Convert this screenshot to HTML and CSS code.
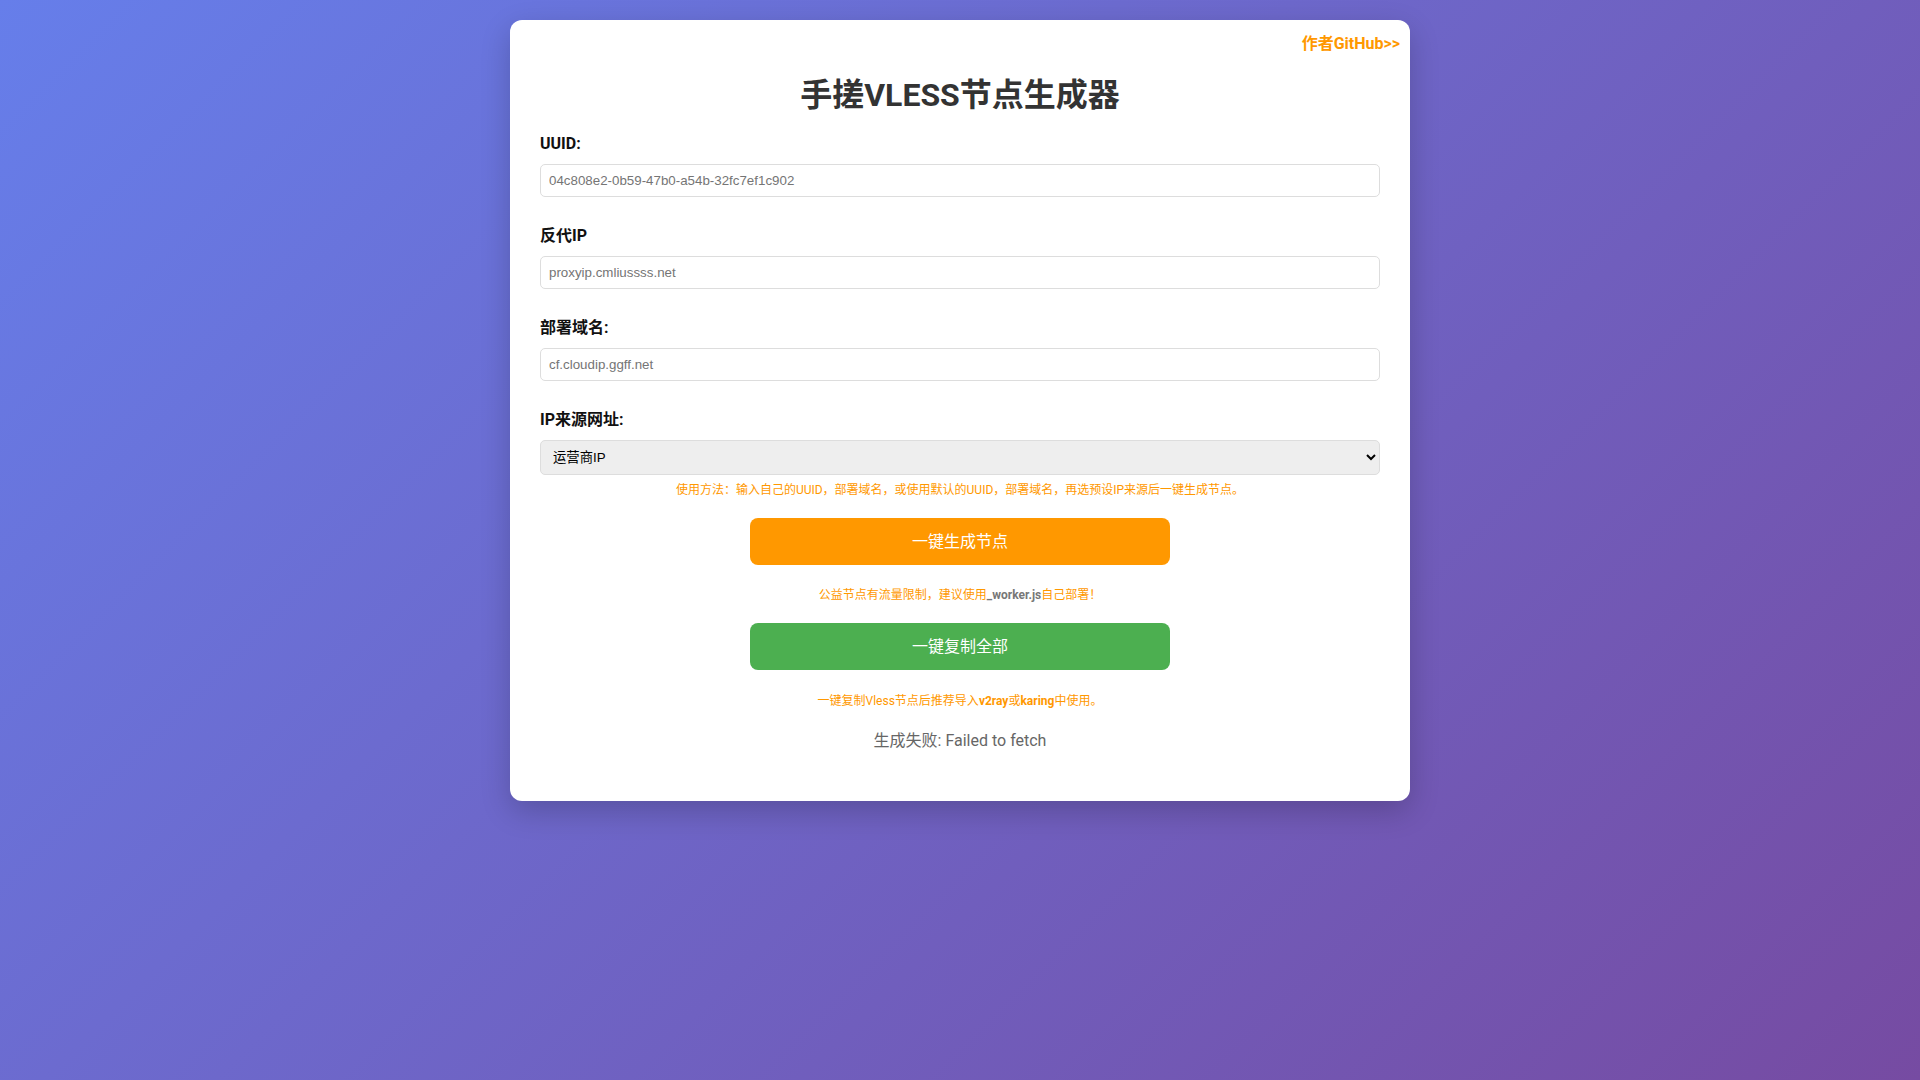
FILE: index.html
```html
<!DOCTYPE html>
<html lang="zh-CN">
<head>
<meta charset="UTF-8">
<title>手搓VLESS节点生成器</title>
<link rel="stylesheet" href="styles.css">
</head>
<body>
<div class="container">
  <a class="github" href="#">作者GitHub&gt;&gt;</a>
  <h1 class="title">手搓VLESS节点生成器</h1>

  <div class="form-group">
    <label class="label" for="uuid">UUID:</label>
    <input class="field" id="uuid" type="text" placeholder="04c808e2-0b59-47b0-a54b-32fc7ef1c902">
  </div>

  <div class="form-group">
    <label class="label" for="proxy">反代IP</label>
    <input class="field" id="proxy" type="text" placeholder="proxyip.cmliussss.net">
  </div>

  <div class="form-group">
    <label class="label" for="host">部署域名:</label>
    <input class="field" id="host" type="text" placeholder="cf.cloudip.ggff.net">
  </div>

  <div class="form-group last">
    <label class="label" for="source">IP来源网址:</label>
    <select class="picker" id="source">
      <option>运营商IP</option>
    </select>
  </div>

  <p class="hint">使用方法：输入自己的UUID，部署域名，或使用默认的UUID，部署域名，再选预设IP来源后一键生成节点。</p>

  <button class="btn btn-orange" type="button">一键生成节点</button>

  <p class="note note-1">公益节点有流量限制，建议使用<b class="gray">_worker.js</b>自己部署！</p>

  <button class="btn btn-green" type="button">一键复制全部</button>

  <p class="note note-2">一键复制Vless节点后推荐导入<b>v2ray</b>或<b>karing</b>中使用。</p>

  <div class="result">生成失败: Failed to fetch</div>
</div>
</body>
</html>
```

FILE: styles.css
```css
html {
  min-height: 100%;
}

body {
  margin: 0;
  padding: 20px;
  min-height: 100vh;
  box-sizing: border-box;
  font-family: Roboto, "Noto Sans CJK SC", sans-serif;
  background: linear-gradient(135deg, #667eea 0%, #764ba2 100%);
}

.container {
  position: relative;
  box-sizing: border-box;
  max-width: 900px;
  margin: 0 auto;
  padding: 30px;
  background: #fff;
  border-radius: 12px;
  box-shadow: 0 10px 30px rgba(0, 0, 0, 0.2);
}

.github {
  position: absolute;
  top: 14px;
  right: 10px;
  font-size: 16px;
  line-height: 20px;
  font-weight: bold;
  color: #ff9800;
  text-decoration: none;
}

.title {
  margin: 25px 0 19px;
  font-size: 32px;
  line-height: 40px;
  font-weight: bold;
  color: #333;
  text-align: center;
}

.form-group {
  display: flex;
  flex-direction: column;
  margin-bottom: 29px;
}

.form-group.last {
  margin-bottom: 7px;
}

.label {
  display: block;
  margin-bottom: 10px;
  font-size: 16px;
  line-height: 20px;
  font-weight: bold;
  color: #111;
}

.field {
  box-sizing: border-box;
  width: 100%;
  height: 33px;
  margin: 0;
  padding: 8px;
  border: 1px solid #ddd;
  border-radius: 5px;
  font-family: "Liberation Sans", Arial, "Noto Sans CJK SC", sans-serif;
  font-size: 13.333px;
  color: #000;
  background: #fff;
}

.field::placeholder {
  color: #757575;
}

.picker {
  box-sizing: border-box;
  width: 100%;
  height: 35px;
  margin: 0;
  padding: 0 8px;
  border: 1px solid #ddd;
  border-radius: 5px;
  background-color: #eee;
  font-family: "Liberation Sans", Arial, "Noto Sans CJK SC", sans-serif;
  font-size: 13.333px;
  color: #000;
}

.hint {
  margin: 0 0 20px;
  font-size: 12px;
  line-height: 16px;
  color: #ff9800;
  text-align: center;
}

.btn {
  display: block;
  width: 50%;
  margin: 0 auto;
  padding: 12px;
  border: none;
  border-radius: 8px;
  font-family: Roboto, "Noto Sans CJK SC", sans-serif;
  font-size: 16px;
  line-height: 23px;
  color: #fff;
  cursor: pointer;
}

.btn-orange {
  background: #ff9800;
}

.btn-green {
  background: #4caf50;
}

.note {
  font-size: 12px;
  line-height: 16px;
  color: #ff9800;
  text-align: center;
}

.note-1 {
  margin: 22px 0 20px;
}

.note-2 {
  margin: 23px 0 22px;
}

.gray {
  color: #777;
}

.result {
  margin-bottom: 20px;
  font-size: 16px;
  line-height: 20px;
  color: #666;
  text-align: center;
}
```
